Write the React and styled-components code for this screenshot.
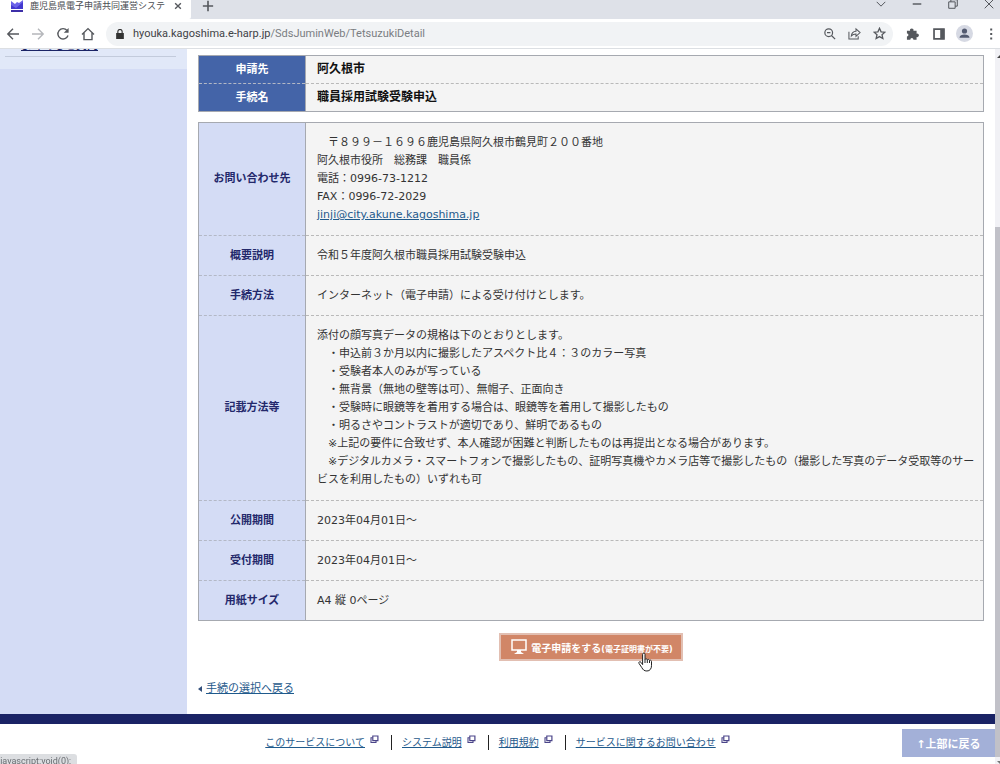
import React from "react";
import styled, { createGlobalStyle } from "styled-components";

const navy = "#1a2365";
const headBlue = "#4464a8";
const paleBlue = "#d4dcf5";
const cellGrey = "#f4f4f4";
const lineGrey = "#a6a9b0";
const linkColor = "#1f5a8c";
const chromeGrey = "#dee1e8";
const iconGrey = "#55585d";
const baseFont = '"DejaVu Sans", "Noto Sans CJK JP", sans-serif';
const uiFont = 'Roboto, "Noto Sans CJK JP", sans-serif';

const GlobalStyle = createGlobalStyle`
    * {
        box-sizing: border-box;
    }
    body {
        margin: 0;
        overflow: hidden;
        background: #fff;
        color: #333;
        font-family: ${baseFont};
        font-size: 11px;
        line-height: 18px;
    }
    a {
        color: ${linkColor};
    }
    button {
        padding: 0;
        border: 0;
        background: none;
        font-family: inherit;
    }
`;

const WindowStyled = styled.div`
    display: flex;
    flex-direction: column;
    height: 100vh;
    overflow: hidden;
`;

const TabBar = styled.div`
    flex: none;
    display: flex;
    height: 19px;
    background: ${chromeGrey};
`;

const Tab = styled.div`
    display: flex;
    align-items: flex-start;
    width: 191px;
    padding-left: 11px;
    background: #fff;
    border-bottom-right-radius: 2px;
    color: #4a4d52;
    font-family: ${uiFont};
    font-size: 9px;
    line-height: 13px;
    svg {
        flex: none;
    }
`;

const TabTitle = styled.span`
    width: 137px;
    margin-left: 7px;
    white-space: nowrap;
`;

const IconButton = styled.button`
    display: flex;
    align-items: center;
    justify-content: center;
    width: ${(props) => props.$width || 25}px;
    height: ${(props) => props.$height || 26}px;
    color: ${(props) => props.$color || iconGrey};
    svg {
        display: block;
    }
`;

const WindowControls = styled.div`
    display: flex;
    margin-left: auto;
    margin-right: -7px;
`;

const Toolbar = styled.div`
    flex: none;
    display: flex;
    align-items: center;
    height: 30px;
    border-bottom: 1px solid #dcdfe3;
    background: #fff;
`;

const AddressBar = styled.div`
    flex: 1;
    display: flex;
    align-items: center;
    height: 24px;
    margin-left: 6px;
    padding: 0 1px 0 9px;
    border-radius: 12px;
    background: #f1f3f5;
`;

const AddressText = styled.div`
    flex: 1;
    margin-left: 8px;
    color: #7a7d82;
    font-family: ${uiFont};
    font-size: 11px;
    white-space: nowrap;
    span {
        color: #3f4246;
    }
`;

const Viewport = styled.div`
    flex: 1;
    display: flex;
    min-height: 0;
    overflow: hidden;
`;

const Page = styled.div`
    flex: 1;
    min-width: 0;
`;

const ScrollTrack = styled.div`
    display: flex;
    flex-direction: column;
    width: 5px;
    background: #f1f1f5;
    svg {
        flex: none;
        display: block;
    }
`;

const ScrollThumb = styled.div`
    flex: 1;
    margin-top: 168px;
    background: #c1c1c8;
`;

const Columns = styled.div`
    display: flex;
`;

const Sidebar = styled.aside`
    flex: none;
    width: 187px;
    background: ${paleBlue};
`;

const SideMenu = styled.nav`
    display: flex;
    flex-direction: column;
    height: 20px;
    padding: 0 11px 0 5px;
    background: #e1e8f8;
`;

const SideItem = styled.div`
    display: flex;
    align-items: flex-end;
    height: 8px;
    overflow: hidden;
    padding: 0 0 5px 16px;
    border-bottom: 1px solid #c3cbdc;
    a {
        color: ${navy};
        font-weight: bold;
        line-height: 10px;
    }
`;

const Main = styled.main`
    flex: 1;
    min-width: 0;
    padding: 6px 11px 16px;
`;

const DataTable = styled.table`
    width: 100%;
    border: 1px solid ${lineGrey};
    border-collapse: collapse;
    table-layout: fixed;
    background: ${cellGrey};
    & + & {
        margin-top: 10px;
    }
`;

const HeadCell = styled.th`
    width: 107px;
    padding: 0;
    border-right: 1px solid ${lineGrey};
    border-top: 1px dashed #b3b8c6;
    background: ${(props) => (props.$dark ? headBlue : paleBlue)};
    color: ${(props) => (props.$dark ? "#fff" : "#23286b")};
    font-weight: bold;
`;

const DataCell = styled.td`
    padding: ${(props) => (props.$tall ? "11px 6px 11px 11px" : "11px 6px 10px 11px")};
    border-top: 1px dashed #b9b9b9;
    white-space: pre-line;
`;

const TitleCell = styled(DataCell)`
    padding: 4px 6px 5px 11px;
    color: #111;
    font-size: 12px;
    font-weight: bold;
`;

const ButtonRow = styled.div`
    display: flex;
    justify-content: center;
    margin-top: 12px;
`;

const ApplyButton = styled.button`
    position: relative;
    display: flex;
    align-items: center;
    gap: 4px;
    height: 28px;
    padding: 0 8px 0 10px;
    border: 2px solid #e2bfb2;
    background: #d18667;
    color: #fff;
    font-size: 10px;
    font-weight: bold;
    white-space: nowrap;
    small {
        font-size: 8px;
    }
`;

const HandCursor = styled.svg`
    position: absolute;
    left: 137px;
    top: 17px;
`;

const BackLink = styled.div`
    display: flex;
    align-items: center;
    gap: 4px;
    margin-top: 19px;
`;

const FooterStyled = styled.footer`
    display: grid;
    grid-template-columns: 1fr auto 1fr;
    align-items: start;
    border-top: 10px solid ${navy};
`;

const FooterLinks = styled.ul`
    grid-column: 2;
    display: flex;
    margin: 11px 0 0;
    padding: 0;
    list-style: none;
    font-size: 10px;
    line-height: 15px;
    li {
        display: flex;
        gap: 5px;
    }
    li + li {
        margin-left: 12px;
        padding-left: 10px;
        border-left: 1px solid #222;
    }
`;

const TopButton = styled.button`
    justify-self: end;
    width: 93px;
    height: 28px;
    margin-top: 5px;
    background: #a3b0d8;
    color: #fff;
    font-size: 11px;
    font-weight: bold;
`;

const StatusBubble = styled.div`
    position: fixed;
    left: 0;
    bottom: 0;
    display: flex;
    justify-content: flex-end;
    width: 77px;
    height: 10px;
    padding-right: 6px;
    overflow: hidden;
    border-top-right-radius: 3px;
    background: #dcdee1;
    color: #6a6d72;
    font-family: ${uiFont};
    font-size: 9px;
    line-height: 14px;
    white-space: nowrap;
`;

const Icon = ({ size = 14, children, ...rest }) => (
    <svg
        width={size}
        height={size}
        viewBox="0 0 14 14"
        fill="none"
        stroke="currentColor"
        strokeWidth="1.4"
        aria-hidden="true"
        {...rest}
    >
        {children}
    </svg>
);

const PopupIcon = () => (
    <svg width="9" height="9" viewBox="0 0 9 9" fill="none" stroke="#4b4589" aria-hidden="true">
        <path d="M2.8 1h5.1v4.6H2.8z" strokeWidth="1.2" />
        <path d="M2.6 2.8H1v4.7h5V5.8" strokeWidth="1.1" />
    </svg>
);

const titleRows = [
    { label: "申請先", value: "阿久根市" },
    { label: "手続名", value: "職員採用試験受験申込" },
];

const photoRules = `添付の顔写真データの規格は下のとおりとします。
　・申込前３か月以内に撮影したアスペクト比４：３のカラー写真
　・受験者本人のみが写っている
　・無背景（無地の壁等は可）、無帽子、正面向き
　・受験時に眼鏡等を着用する場合は、眼鏡等を着用して撮影したもの
　・明るさやコントラストが適切であり、鮮明であるもの
　※上記の要件に合致せず、本人確認が困難と判断したものは再提出となる場合があります。
　※デジタルカメラ・スマートフォンで撮影したもの、証明写真機やカメラ店等で撮影したもの（撮影した写真のデータ受取等のサービスを利用したもの）いずれも可`;

const detailRows = [
    {
        label: "お問い合わせ先",
        tall: true,
        value: (
            <>
                {`　〒８９９－１６９６鹿児島県阿久根市鶴見町２００番地
阿久根市役所　総務課　職員係
電話：0996-73-1212
FAX：0996-72-2029
`}
                <a href="mailto:jinji@city.akune.kagoshima.jp">jinji@city.akune.kagoshima.jp</a>
            </>
        ),
    },
    { label: "概要説明", value: "令和５年度阿久根市職員採用試験受験申込" },
    { label: "手続方法", value: "インターネット（電子申請）による受け付けとします。" },
    { label: "記載方法等", tall: true, value: photoRules },
    { label: "公開期間", value: "2023年04月01日～" },
    { label: "受付期間", value: "2023年04月01日～" },
    { label: "用紙サイズ", value: "A4 縦 0ページ" },
];

const footerLinks = ["このサービスについて", "システム説明", "利用規約", "サービスに関するお問い合わせ"];

const BrowserChrome = () => (
    <>
        <TabBar>
            <Tab>
                <svg width="12" height="13" viewBox="0 0 12 13" aria-hidden="true">
                    <path d="M0 1l4 3 2-2 2 1 4-3v9H0z" fill="#6b62e8" />
                    <path d="M0 5l5 3 7-6v7H0z" fill="#4338cf" />
                    <path d="M0 10h12v2H0z" fill="#3d2fa8" />
                </svg>
                <TabTitle>鹿児島県電子申請共同運営システ</TabTitle>
                <IconButton $width={22} $height={12} aria-label="タブを閉じる">
                    <Icon size={8}><path d="M2 2l10 10M12 2L2 12" strokeWidth="2.4" /></Icon>
                </IconButton>
            </Tab>
            <IconButton $width={34} $height={12} aria-label="新しいタブ">
                <Icon size={12}><path d="M7 1v12M1 7h12" strokeWidth="1.9" /></Icon>
            </IconButton>
            <WindowControls>
                <IconButton $width={36} $height={8} aria-label="タブを検索">
                    <Icon size={10}><path d="M1 4l6 6 6-6" /></Icon>
                </IconButton>
                <IconButton $width={36} $height={8} aria-label="最小化">
                    <Icon size={10}><path d="M1 7h12" strokeWidth="2" /></Icon>
                </IconButton>
                <IconButton $width={36} $height={8} aria-label="元に戻す">
                    <Icon size={10}><path d="M1 4h9v9H1zM4 4V1h9v9h-3" /></Icon>
                </IconButton>
                <IconButton $width={36} $height={8} aria-label="閉じる">
                    <Icon size={10}><path d="M1 1l12 12M13 1L1 13" /></Icon>
                </IconButton>
            </WindowControls>
        </TabBar>
        <Toolbar>
            <IconButton aria-label="戻る">
                <Icon><path d="M13 7H2M7 1.8L1.8 7 7 12.2" /></Icon>
            </IconButton>
            <IconButton $color="#b5b7bb" aria-label="進む">
                <Icon><path d="M1 7h11M7 1.8L12.2 7 7 12.2" /></Icon>
            </IconButton>
            <IconButton aria-label="再読み込み">
                <Icon>
                    <path d="M12 8.6A5.2 5.2 0 1 1 11 3.4" />
                    <path d="M12.6 1v4.8H7.8z" fill="currentColor" stroke="none" />
                </Icon>
            </IconButton>
            <IconButton aria-label="ホーム">
                <Icon><path d="M1 7.4L7 1.6l6 5.8M3 6v6.6h8V6" /></Icon>
            </IconButton>
            <AddressBar>
                <Icon size={10}>
                    <path d="M1.6 5.6h10.8V14H1.6z" fill="currentColor" stroke="none" />
                    <path d="M4 6V3.6a3 3 0 0 1 6 0V6" strokeWidth="1.6" />
                </Icon>
                <AddressText>
                    <span>hyouka.kagoshima.e-harp.jp</span>/SdsJuminWeb/TetsuzukiDetail
                </AddressText>
                <IconButton aria-label="ズーム">
                    <Icon size={12}><path d="M9 9l4 4M3.5 5.5h4M10 5.5a4.5 4.5 0 1 1-9 0 4.5 4.5 0 0 1 9 0z" /></Icon>
                </IconButton>
                <IconButton aria-label="共有">
                    <Icon size={13} strokeWidth="1.1">
                        <path d="M1 5v8h10v-3" />
                        <path d="M3.6 9.6c.3-3.4 2.2-5 5-5.1V2l4.4 4-4.4 4V7.6c-2.2 0-3.7.5-5 2z" />
                    </Icon>
                </IconButton>
                <IconButton aria-label="ブックマーク">
                    <Icon size={13}><path d="M7 1.4l1.7 3.8 4.1.4-3.1 2.7.9 4.1L7 10.3l-3.6 2.1.9-4.1-3.1-2.7 4.1-.4z" /></Icon>
                </IconButton>
            </AddressBar>
            <IconButton $width={39} aria-label="拡張機能">
                <Icon size={13}>
                    <path d="M1 4h3.4a1.9 1.9 0 1 1 3.6 0h3.4v3.2a1.9 1.9 0 1 1 0 3.6V13.6H8a1.7 1.7 0 0 0-3.4 0H1v-3.4a1.6 1.6 0 0 0 0-3.2z" fill="currentColor" stroke="none" />
                </Icon>
            </IconButton>
            <IconButton $width={14} aria-label="サイドパネル">
                <Icon size={12}>
                    <path d="M1.2 1.2h11.6v11.6H1.2z" strokeWidth="2" />
                    <path d="M8.4 1h4.6v12H8.4z" fill="currentColor" stroke="none" />
                </Icon>
            </IconButton>
            <IconButton $width={36} aria-label="プロフィール">
                <svg width="17" height="17" viewBox="0 0 17 17" aria-hidden="true">
                    <circle cx="8.5" cy="8.5" r="8.5" fill="#d6d9e3" />
                    <circle cx="8.5" cy="6" r="2.6" fill="#535a70" />
                    <path d="M3.5 12.8c0-4.400 10-4.400 10 0z" fill="#535a70" />
                </svg>
            </IconButton>
            <IconButton $width={18} aria-label="メニュー">
                <Icon size={14}>
                    <path d="M6.200 1.400h2v2h-2zM6.200 6h2v2h-2zM6.200 10.600h2v2h-2z" fill="currentColor" stroke="none" />
                </Icon>
            </IconButton>
        </Toolbar>
    </>
);

const App = () => {
    return (
        <WindowStyled>
            <GlobalStyle />
            <BrowserChrome />
            <Viewport>
                <Page>
                    <Columns>
                        <Sidebar>
                            <SideMenu>
                                <SideItem><a href="#faq">よくあるご質問</a></SideItem>
                            </SideMenu>
                        </Sidebar>
                        <Main>
                            <DataTable>
                                <tbody>
                                    {titleRows.map((row) => (
                                        <tr key={row.label}>
                                            <HeadCell scope="row" $dark>{row.label}</HeadCell>
                                            <TitleCell>{row.value}</TitleCell>
                                        </tr>
                                    ))}
                                </tbody>
                            </DataTable>
                            <DataTable>
                                <tbody>
                                    {detailRows.map((row) => (
                                        <tr key={row.label}>
                                            <HeadCell scope="row">{row.label}</HeadCell>
                                            <DataCell $tall={row.tall}>{row.value}</DataCell>
                                        </tr>
                                    ))}
                                </tbody>
                            </DataTable>
                            <ButtonRow>
                                <ApplyButton type="button">
                                    <svg width="16" height="16" viewBox="0 0 16 16" aria-hidden="true">
                                        <path d="M1 1h14v10H1z" fill="none" stroke="#fff" strokeWidth="1.5" />
                                        <path d="M6 11h4v2l3 2H3l3-2z" fill="#fff" />
                                    </svg>
                                    <span>電子申請をする<small>(電子証明書が不要)</small></span>
                                    <HandCursor width="15" height="20" viewBox="0 0 15 20" aria-hidden="true">
                                        <path
                                            d="M4.6 12.6V2.4c0-1.8 2.4-1.8 2.4 0v5.2c.5-1.2 2.2-.9 2.3.3.6-.9 2.1-.6 2.2.6.8-.7 2-.2 2 1v4.2c0 3-1.6 5.3-4.6 5.3-2.7 0-3.9-1.2-5.100-3.400L1 11.400c-.7-1.500 1-2.300 2-1.100z"
                                            fill="#fff"
                                            stroke="#222"
                                        />
                                        <path d="M7 7.6V11M9.3 8v3M11.5 8.6V11" stroke="#222" />
                                    </HandCursor>
                                </ApplyButton>
                            </ButtonRow>
                            <BackLink>
                                <svg width="4" height="6" viewBox="0 0 4 6" aria-hidden="true">
                                    <path d="M4 0v6L0 3z" fill="#34507c" />
                                </svg>
                                <a href="#list">手続の選択へ戻る</a>
                            </BackLink>
                        </Main>
                    </Columns>
                    <FooterStyled>
                        <FooterLinks>
                            {footerLinks.map((text) => (
                                <li key={text}>
                                    <a href="#footer">{text}</a>
                                    <PopupIcon />
                                </li>
                            ))}
                        </FooterLinks>
                        <TopButton type="button">↑上部に戻る</TopButton>
                    </FooterStyled>
                </Page>
                <ScrollTrack>
                    <svg width="5" height="10" viewBox="0 0 5 10" aria-hidden="true">
                        <path d="M2 9l3-3v3z" fill="#444" />
                    </svg>
                    <ScrollThumb />
                    <svg width="5" height="7" viewBox="0 0 5 7" aria-hidden="true">
                        <path d="M2 4h3v3z" fill="#777" />
                    </svg>
                </ScrollTrack>
            </Viewport>
            <StatusBubble>javascript:void(0);</StatusBubble>
        </WindowStyled>
    );
};

export default App;
